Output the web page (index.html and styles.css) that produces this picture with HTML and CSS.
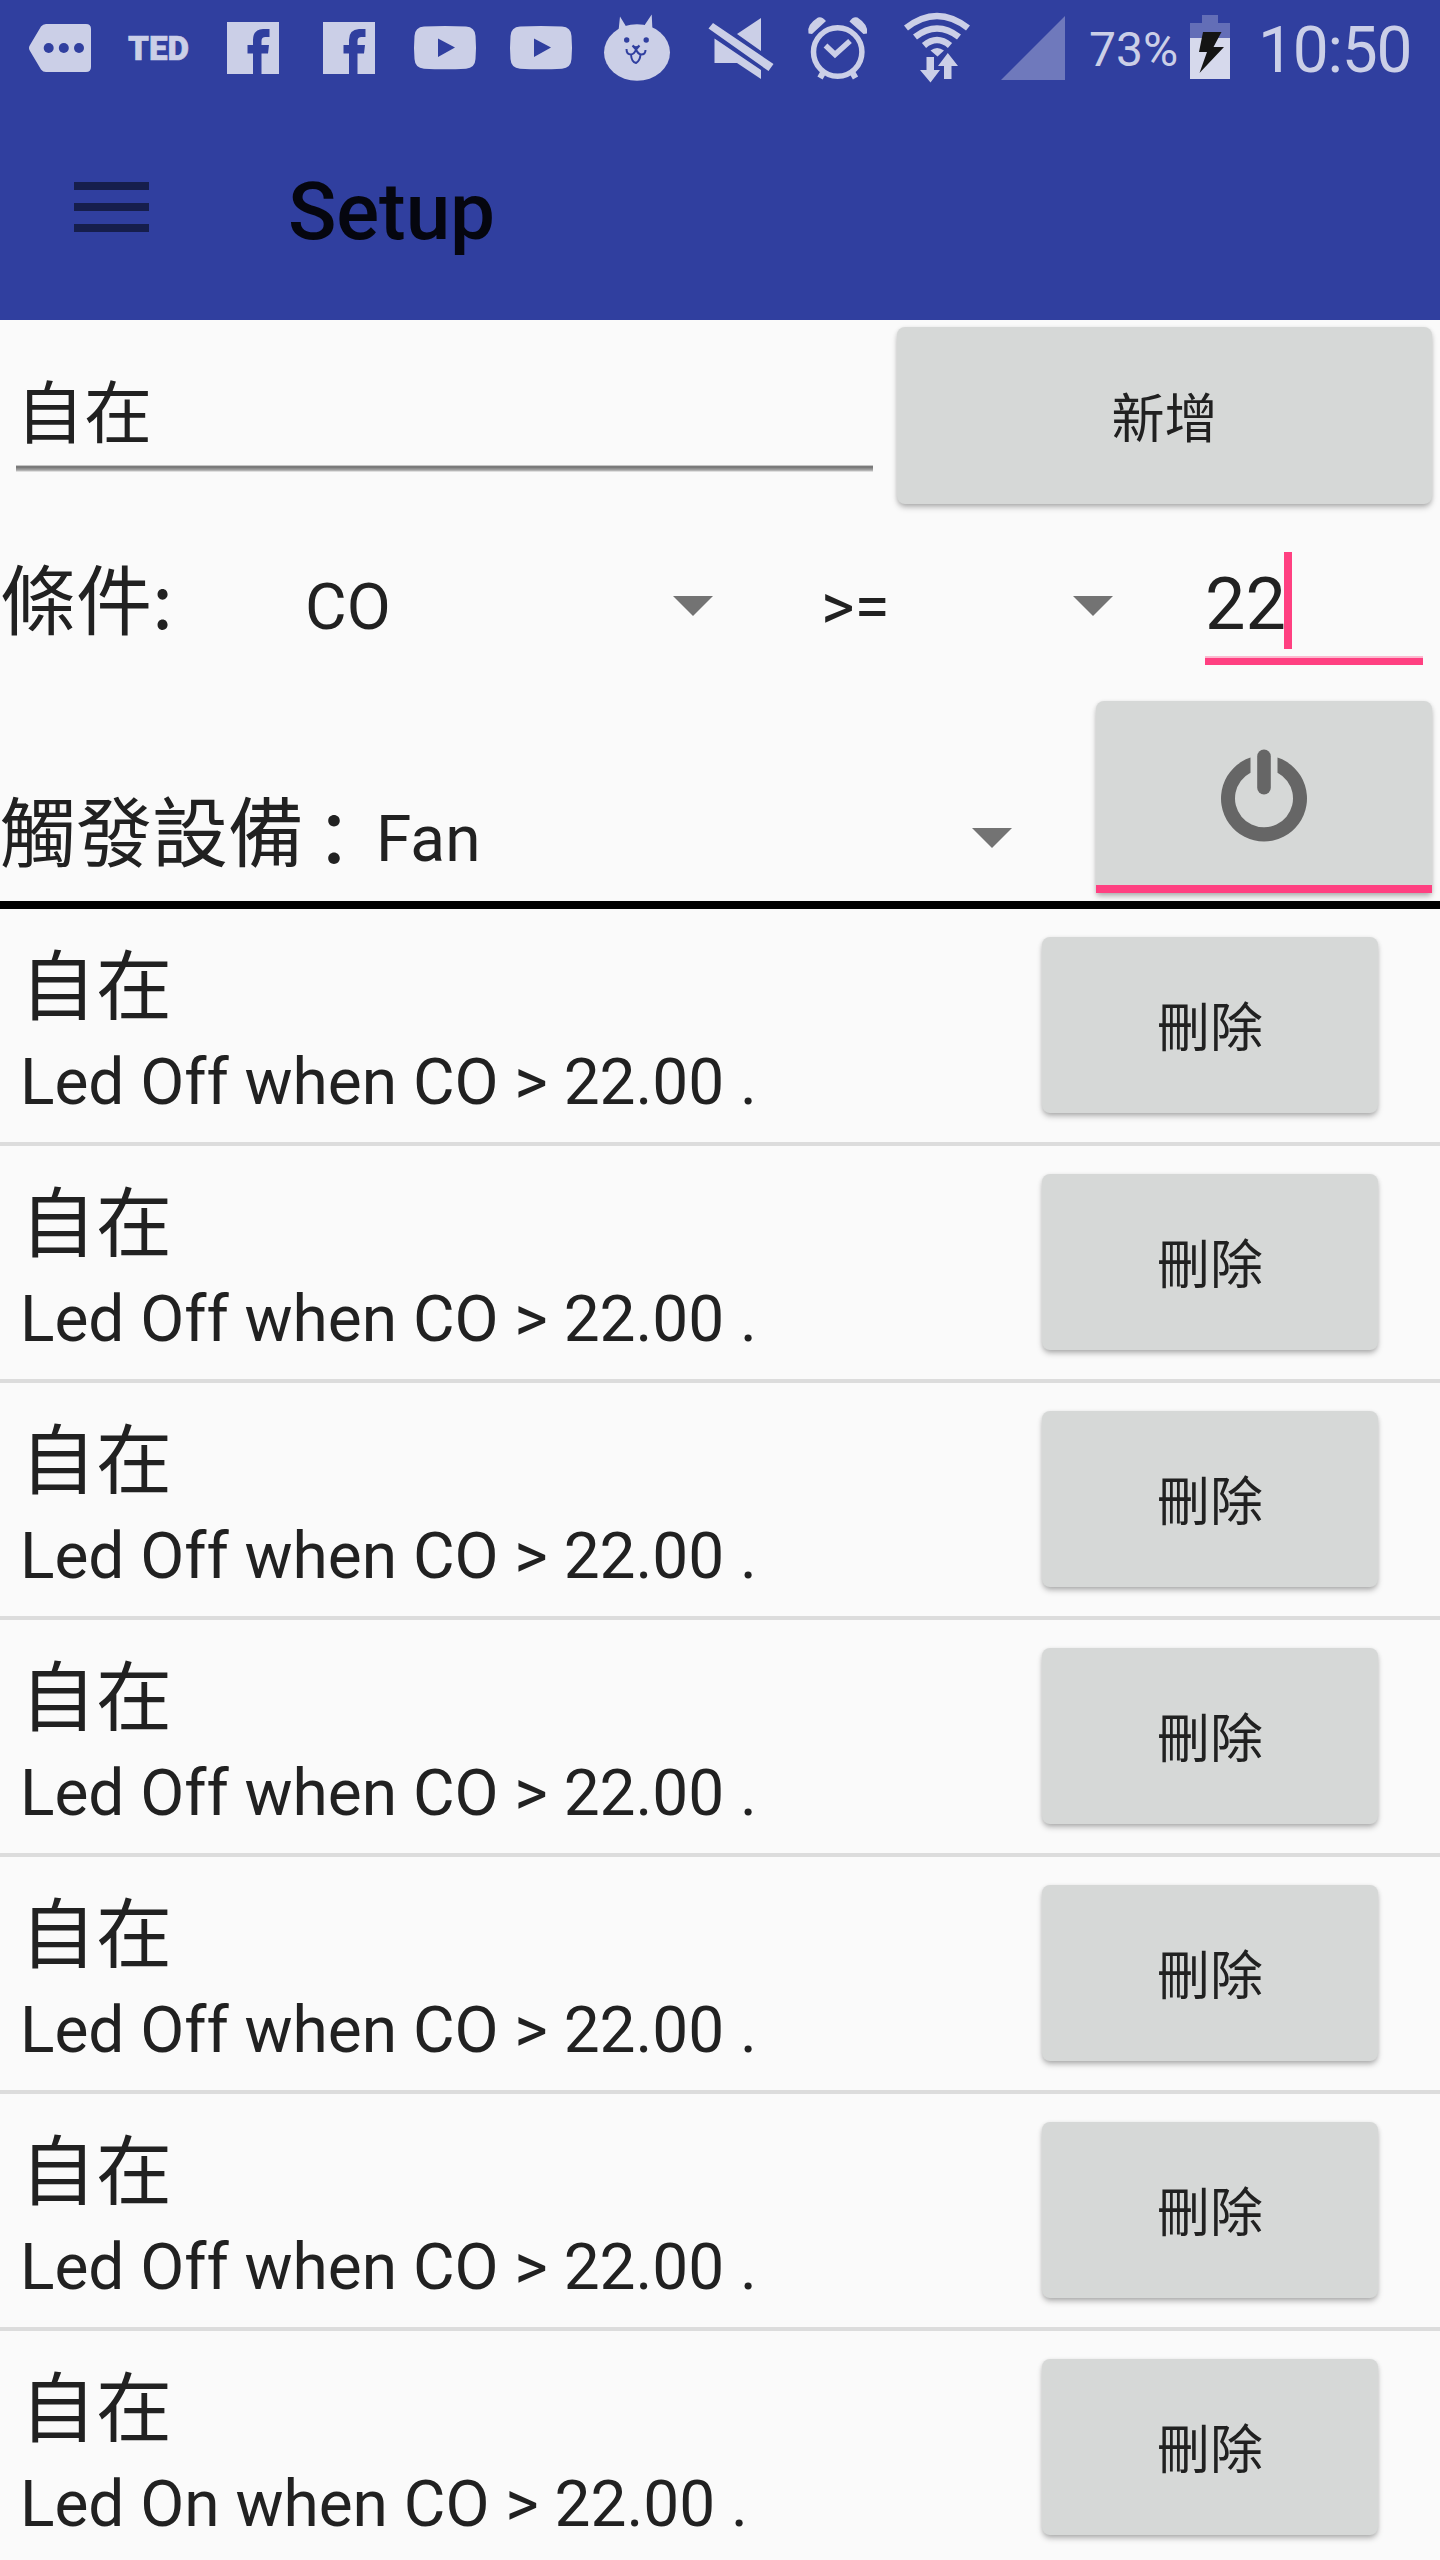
FILE: index.html
```html
<!DOCTYPE html>
<html lang="zh-Hant">
<head>
<meta charset="utf-8">
<title>Setup</title>
<link rel="stylesheet" href="styles.css">
</head>
<body>
<div class="screen">
  <header class="header">
    <div class="status">
      <svg width="108" height="96" viewBox="0 0 108 96"><path class="ic" d="M46 24H86Q91 24 91 29V67Q91 72 86 72H46Q43 72 41 69.500L30 51Q28 48 30 45L41 26.500Q43 24 46 24Z"/><g class="hole"><circle cx="48.700" cy="48" r="5"/><circle cx="63.800" cy="48" r="5"/><circle cx="79" cy="48" r="5"/></g></svg>
      <svg width="96" height="96" viewBox="108 0 96 96"><text class="ted" x="128" y="59.700" textLength="61" lengthAdjust="spacingAndGlyphs">TED</text></svg>
      <svg width="96" height="96" viewBox="204 0 96 96"><path class="ic" d="M227 22H279V74H261.500V53.500H268L269 45H261.500V41Q261.500 37 265.500 37H269.500V29H263Q253 29.500 253 40V45H247.500V53.500H253V74H227Z"/></svg>
      <svg width="96" height="96" viewBox="204 0 96 96"><path class="ic" d="M227 22H279V74H261.500V53.500H268L269 45H261.500V41Q261.500 37 265.500 37H269.500V29H263Q253 29.500 253 40V45H247.500V53.500H253V74H227Z"/></svg>
      <svg width="96" height="96" viewBox="396 0 96 96"><path class="ic" fill-rule="evenodd" d="M424 26.500Q445 25.300 466 26.500Q475 27 475.500 36Q476.500 47.500 475.500 59Q475 68 466 68.700Q445 70 424 68.700Q415 68 414.500 59Q413.500 47.500 414.500 36Q415 27 424 26.500ZM438 38.500V57L455 47.500Z"/></svg>
      <svg width="96" height="96" viewBox="396 0 96 96"><path class="ic" fill-rule="evenodd" d="M424 26.500Q445 25.300 466 26.500Q475 27 475.500 36Q476.500 47.500 475.500 59Q475 68 466 68.700Q445 70 424 68.700Q415 68 414.500 59Q413.500 47.500 414.500 36Q415 27 424 26.500ZM438 38.500V57L455 47.500Z"/></svg>
      <svg width="96" height="96" viewBox="588 0 96 96"><ellipse class="ic" cx="637" cy="52.500" rx="33" ry="28.300"/><path class="ic" d="M618.500 31L620 16.500L627 28ZM644 26L651.700 14.500L652.500 31Z"/><g class="hole"><circle cx="626.700" cy="40" r="2.700"/><circle cx="646.200" cy="40" r="2.700"/></g><path class="face" d="M626.500 49Q626.500 54.500 631 54.500Q634.500 54 636 49.500Q638 54 641 54.500Q645.500 54.500 645.500 50M632.500 45.500Q635.500 49 639.500 45.500M636 49.500L632.500 45.500M636 49.500L639.500 45.500M631 54.500Q631.500 62 636 63Q640 61 640.500 54.500"/></svg>
      <svg width="106" height="96" viewBox="684 0 106 96"><path class="ic" d="M713 23L773.500 64L768.500 71L708.500 28.500ZM737 34L761 18V51ZM714.500 38.500L761 70V79L737 63H714.500Z"/></svg>
      <svg width="100" height="96" viewBox="790 0 100 96"><circle class="line" cx="837.700" cy="52" r="24.200" stroke-width="5.500"/><path class="line" d="M825.500 45.500L835 54.500L850 41" stroke-width="5.500"/><path class="ic" d="M808.500 33.500Q806 25 818 17.500Q822 16 826 21L812 34ZM867 33.500Q869 25 857.500 17.500Q853 16 849.500 21.500L863.500 34Z"/><path class="line" d="M824 71L820 78M851.500 71L855.500 78" stroke-width="6"/></svg>
      <svg width="100" height="96" viewBox="890 0 100 96"><path class="line" d="M906 28Q937 4 968 28M915 37Q937 20 959 37M924 45.500Q937 34.500 950 45.500" stroke-width="6.500"/><path class="ic" d="M930.500 50.500Q937 45.500 944 50.500L937.500 56.500ZM926.500 57H934V70H940L930.500 82.500L920 70H926.500ZM944 79V66H938L947.800 53L958 66H951.500V79Z"/></svg>
      <svg width="99" height="96" viewBox="990 0 99 96"><path class="signal" d="M1001 80L1065 16V80Z"/></svg>
      <span class="percent">73%</span>
      <svg width="40" height="96" viewBox="1190 0 40 96"><path fill="#636eb7" d="M1202 15H1218V23H1230V38H1190V23H1202Z"/><path fill="#d6d9ec" d="M1190 38H1230V79H1190Z"/><path fill="#141414" d="M1203 32H1221.500L1213.500 47H1224L1199.500 73L1207 52H1199Z"/></svg>
      <span class="clock">10:50</span>
    </div>
    <div class="toolbar">
      <div class="menu"><i></i><i></i><i></i></div>
      <h1 class="title">Setup</h1>
    </div>
  </header>
  <section class="form">
    <div class="row row-name">
      <div class="name-field">自在</div>
      <button class="btn btn-add">新增</button>
    </div>
    <div class="row row-cond">
      <span class="label">條件:</span>
      <div class="spinner sp-sensor"><span>CO</span><i class="arrow"></i></div>
      <div class="spinner sp-op"><span>&gt;=</span><i class="arrow"></i></div>
      <div class="value-field"><span>22</span><i class="caret"></i></div>
    </div>
    <div class="row row-device">
      <span class="label">觸發設備<span class="colon">：</span></span>
      <div class="spinner sp-device"><span>Fan</span><i class="arrow"></i></div>
      <button class="btn btn-toggle"><svg width="96" height="96" viewBox="0 0 96 96"><path d="M34.500 10.600A43 43 0 1 0 61.500 10.600V25.700A29 29 0 1 1 34.500 25.700Z"/><rect x="41.200" y="2.500" width="13.600" height="45" rx="6.800"/></svg></button>
    </div>
  </section>
  <ul class="list">
    <li class="item"><div class="info"><p class="name">自在</p><p class="rule">Led Off when CO &gt; 22.00 .</p></div><button class="btn btn-del">刪除</button></li>
    <li class="item"><div class="info"><p class="name">自在</p><p class="rule">Led Off when CO &gt; 22.00 .</p></div><button class="btn btn-del">刪除</button></li>
    <li class="item"><div class="info"><p class="name">自在</p><p class="rule">Led Off when CO &gt; 22.00 .</p></div><button class="btn btn-del">刪除</button></li>
    <li class="item"><div class="info"><p class="name">自在</p><p class="rule">Led Off when CO &gt; 22.00 .</p></div><button class="btn btn-del">刪除</button></li>
    <li class="item"><div class="info"><p class="name">自在</p><p class="rule">Led Off when CO &gt; 22.00 .</p></div><button class="btn btn-del">刪除</button></li>
    <li class="item"><div class="info"><p class="name">自在</p><p class="rule">Led Off when CO &gt; 22.00 .</p></div><button class="btn btn-del">刪除</button></li>
    <li class="item"><div class="info"><p class="name">自在</p><p class="rule">Led On when CO &gt; 22.00 .</p></div><button class="btn btn-del">刪除</button></li>
  </ul>
</div>
</body>
</html>
```
FILE: styles.css
```css
* { box-sizing: border-box; }
body, h1, p, ul { margin: 0; padding: 0; }
body {
  font-family: Roboto, "Noto Sans CJK TC", sans-serif;
  color: #212121;
  background: #fafafa;
}
.screen { width: 1440px; height: 2560px; overflow: hidden; }

/* Header */
.header { height: 320px; background: #303f9f; }
.status { display: flex; height: 96px; color: #cbcfe7; }
.status svg { flex: none; display: block; }
.ic { fill: #cbcfe7; }
.hole { fill: #303f9f; }
.line { fill: none; stroke: #cbcfe7; }
.face { fill: none; stroke: #303f9f; stroke-width: 2; }
.signal { fill: #6f79bc; }
.ted { font: 900 32.5px Roboto, sans-serif; fill: #cbcfe7; stroke: #cbcfe7; stroke-width: .6px; }
.percent { width: 101px; font-size: 48px; line-height: 99px; white-space: nowrap; }
.clock { padding-left: 28px; font-size: 64px; line-height: 102px; letter-spacing: -1.2px; white-space: nowrap; }
.toolbar { display: flex; padding-top: 76px; }
.menu { display: flex; flex-direction: column; gap: 13px; width: 75px; margin: 10px 139px 0 74px; }
.menu i { height: 8px; background: #161e4c; }
.title { font-size: 80px; font-weight: 500; line-height: 80px; letter-spacing: -.1px; color: #05060f; }

/* Buttons */
.btn {
  border: 0;
  padding: 8px 0 0;
  border-radius: 8px;
  background: #d6d8d7;
  color: #212121;
  font: 400 53px/60px Roboto, "Noto Sans CJK TC", sans-serif;
  box-shadow: 0 4px 6px -1px rgba(0, 0, 0, .28), 0 1px 4px rgba(0, 0, 0, .1);
}

/* Form */
.form { height: 589px; border-bottom: 8px solid #000; }
.row { display: flex; }
.row-name { height: 192px; padding: 7px 8px 0 16px; gap: 24px; }
.name-field {
  width: 857px;
  height: 145px;
  padding-top: 38px;
  font-size: 68px;
  line-height: 100px;
  background: linear-gradient(#c4c4c4 0 1px, #7a7a7a 1px 3px, #8c8c8c 3px 4px, #9c9c9c 4px 5px, #b4b4b4 5px 6px, #dedede 6px) bottom / 100% 7px no-repeat;
}
.btn-add { width: 535px; height: 177px; }
.row-cond { height: 173px; }
.label { font-family: "Noto Sans CJK TC", sans-serif; font-size: 76px; line-height: 100px; white-space: nowrap; }
.colon { margin-left: -8px; line-height: 60px; vertical-align: -7px; }
.row-cond .label { width: 305px; padding-top: 34px; }
.spinner { display: flex; justify-content: space-between; font-size: 64px; line-height: 100px; }
.arrow {
  width: 40px;
  height: 20px;
  background: #737373;
  clip-path: polygon(0 0, 100% 0, 50% 100%);
}
.sp-sensor { width: 408px; padding-top: 46px; }
.sp-op { width: 400px; padding-top: 46px; padding-left: 108px; }
.row-cond .arrow { margin-top: 38px; }
.value-field {
  display: flex;
  width: 218px;
  height: 153px;
  margin-left: 92px;
  padding-top: 40px;
  font-size: 72px;
  line-height: 105px;
  border-bottom: 7px solid #ff4081;
  box-shadow: inset 0 -2px #fbb9cf;
}
.caret { width: 8px; height: 97px; background: #ff4081; margin-left: -2px; }
.row-device { height: 216px; }
.row-device .label { width: 376px; padding-top: 93px; }
.sp-device { width: 636px; padding-top: 105px; }
.sp-device .arrow { margin-top: 38px; }
.btn-toggle {
  display: flex;
  justify-content: center;
  width: 336px;
  height: 192px;
  margin: 16px 0 0 84px;
  padding-top: 46px;
  border-bottom: 8px solid #ff4081;
  border-radius: 8px 8px 0 0;
}
.btn-toggle svg { fill: #666; }

/* Rules */
.list { list-style: none; }
.item { display: flex; height: 237px; border-bottom: 4px solid #dcdcdc; }
.info { width: 1042px; padding: 29px 0 0 20px; }
.name { font-size: 76px; line-height: 100px; }
.rule { font-size: 64px; line-height: 90px; letter-spacing: -.03px; white-space: pre; }
.btn-del { width: 336px; height: 176px; margin-top: 28px; }
```
